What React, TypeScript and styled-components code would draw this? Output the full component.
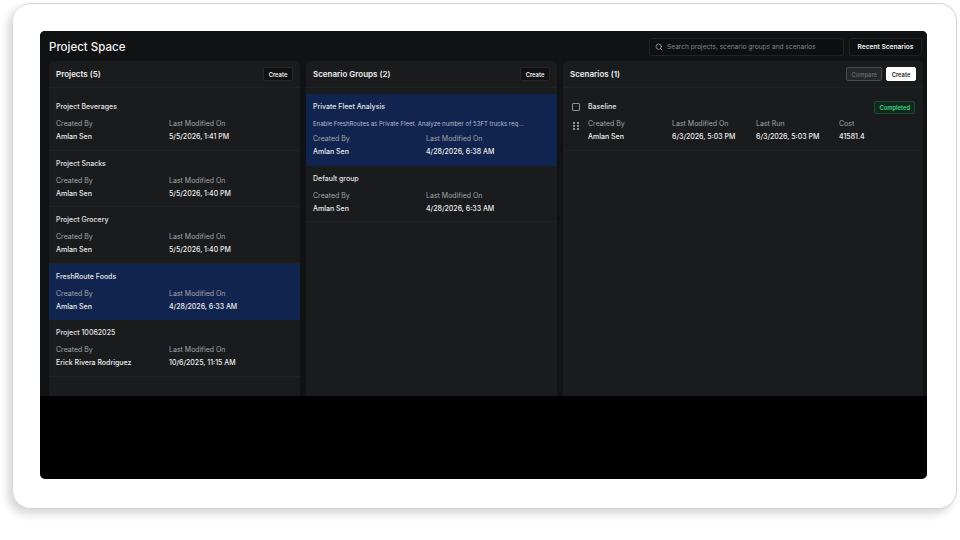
import React from 'react';
import styled, { createGlobalStyle } from 'styled-components';
import { Search } from 'lucide-react';

const GlobalStyle = createGlobalStyle`
  html, body {
    margin: 0;
    height: 100%;
    background: #ffffff;
    font-family: 'Inter', 'Liberation Sans', sans-serif;
  }
  * {
    box-sizing: border-box;
  }
`;

const Stage = styled.div`
  width: 960px;
  height: 540px;
  padding: 3px 3px 31px 13px;
  overflow: hidden;
`;

const Card = styled.div`
  height: 100%;
  padding: 27px 29px 29px 27px;
  background: #ffffff;
  border: 1px solid #d4d4d4;
  border-left: 0;
  border-radius: 18px;
  box-shadow: -5px 5px 9px rgba(0, 0, 0, 0.16);
`;

const AppWindow = styled.div`
  height: 100%;
  display: flex;
  flex-direction: column;
  background: #000000;
  border-radius: 5px;
  overflow: hidden;
`;

const Workspace = styled.div`
  height: 365px;
  flex-shrink: 0;
  display: flex;
  flex-direction: column;
  padding: 0 5px 0 9px;
  background: #111214;
`;

const TopBar = styled.header`
  height: 30px;
  flex-shrink: 0;
  display: flex;
  align-items: center;
  gap: 5px;
  padding-top: 1px;
`;

const Title = styled.h1`
  flex: 1;
  margin: 0;
  font-size: 11.5px;
  font-weight: 500;
  color: #f2f2f3;
`;

const SearchBox = styled.div`
  width: 195px;
  height: 18px;
  display: flex;
  align-items: center;
  gap: 4px;
  padding: 0 5px;
  font-size: 6.6px;
  color: #85878b;
  background: #0e0f11;
  border: 1px solid #212225;
  border-radius: 3px;

  svg {
    color: #b8babd;
  }
`;

const RecentButton = styled.button`
  width: 73px;
  height: 18px;
  padding: 0;
  font: 600 6.6px 'Inter', sans-serif;
  color: #f0f0f1;
  background: #0e0f11;
  border: 1px solid #212225;
  border-radius: 3px;
`;

const Columns = styled.div`
  flex: 1;
  min-height: 0;
  display: grid;
  grid-template-columns: 251px 251px 360px;
  gap: 6px;
`;

const Panel = styled.section`
  display: flex;
  flex-direction: column;
  background: #1a1b1d;
  border-radius: 5px 5px 0 0;
`;

const PanelHeader = styled.div`
  height: 27px;
  flex-shrink: 0;
  display: flex;
  align-items: center;
  justify-content: space-between;
  padding: 0 7px;
  border-bottom: 1px solid #202123;
`;

const PanelTitle = styled.h2`
  margin: 0;
  font-size: 8px;
  font-weight: 600;
  color: #eeeeef;
`;

const Actions = styled.div`
  display: flex;
  gap: 4px;
`;

const SmallButton = styled.button<{ $variant?: 'light' | 'disabled' }>`
  height: 14px;
  min-width: 30px;
  padding: 0 4px;
  font: 600 5.8px 'Inter', sans-serif;
  border-radius: 2px;
  color: ${(p) => (p.$variant === 'light' ? '#17181a' : p.$variant === 'disabled' ? '#64666a' : '#f0f0f1')};
  background: ${(p) => (p.$variant === 'light' ? '#ffffff' : p.$variant === 'disabled' ? '#26272a' : '#0f1012')};
  border: 1px solid ${(p) => (p.$variant === 'light' ? '#ffffff' : p.$variant === 'disabled' ? '#4a4b4f' : '#26272a')};
`;

const List = styled.div`
  padding-top: 6px;
`;

const Row = styled.article<{ $selected?: boolean }>`
  padding: 7px 7px 6.5px;
  background: ${(p) => (p.$selected ? '#11244f' : 'transparent')};
  border-bottom: 1px solid ${(p) => (p.$selected ? '#11244f' : '#202123')};
`;

const ScenarioRow = styled.article`
  display: flex;
  gap: 8px;
  padding: 7px 8px 6.5px 9px;
  border-bottom: 1px solid #202123;
`;

const RowTools = styled.div`
  width: 8px;
  flex-shrink: 0;
  display: flex;
  flex-direction: column;
  align-items: center;
  gap: 11px;
  padding-top: 2px;
`;

const Checkbox = styled.span`
  width: 8px;
  height: 8px;
  border: 1px solid #8b8d91;
  border-radius: 1px;
`;

const ScenarioBody = styled.div`
  flex: 1;
`;

const TitleLine = styled.div`
  height: 13px;
  display: flex;
  align-items: flex-start;
  justify-content: space-between;
`;

const RowTitle = styled.div`
  height: 12px;
  font-size: 7px;
  line-height: 12px;
  font-weight: 500;
  color: #e3e4e6;
`;

const Description = styled.div`
  height: 12px;
  margin-top: 5px;
  font-size: 6px;
  line-height: 12px;
  color: #b4bccb;
  white-space: nowrap;
`;

const Badge = styled.span`
  height: 13px;
  padding: 0 4px;
  font-size: 5.8px;
  line-height: 11px;
  font-weight: 600;
  color: #45d483;
  background: #10291d;
  border: 1px solid #1d4a32;
  border-radius: 2px;
`;

const MetaGrid = styled.div<{ $columns: string; $tight?: boolean }>`
  display: grid;
  grid-template-columns: ${(p) => p.$columns};
  grid-auto-rows: 12px;
  row-gap: 1px;
  margin-top: ${(p) => (p.$tight ? '3px' : '5px')};
`;

const ScenarioMeta = styled(MetaGrid)`
  margin-top: 4px;
`;

const Label = styled.div`
  font-size: 7px;
  line-height: 12px;
  color: #a3a5a9;
`;

const Value = styled.div`
  font-size: 7px;
  line-height: 12px;
  font-weight: 500;
  color: #eeeeef;
  white-space: nowrap;
`;

const Blank = styled.div`
  flex: 1;
`;

const projects = [
  { name: 'Project Beverages', by: 'Amlan Sen', on: '5/5/2026, 1:41 PM' },
  { name: 'Project Snacks', by: 'Amlan Sen', on: '5/5/2026, 1:40 PM' },
  { name: 'Project Grocery', by: 'Amlan Sen', on: '5/5/2026, 1:40 PM' },
  { name: 'FreshRoute Foods', by: 'Amlan Sen', on: '4/28/2026, 6:33 AM', selected: true },
  { name: 'Project 10062025', by: 'Erick Rivera Rodriguez', on: '10/6/2025, 11:15 AM' },
];

const groups = [
  {
    name: 'Private Fleet Analysis',
    text: 'Enable FreshRoutes as Private Fleet. Analyze number of 53FT trucks req...',
    by: 'Amlan Sen',
    on: '4/28/2026, 6:38 AM',
    selected: true,
  },
  { name: 'Default group', by: 'Amlan Sen', on: '4/28/2026, 6:33 AM' },
];

const DragDots = () => (
  <svg width="6" height="8" viewBox="0 0 6 8" fill="#d6d7d9">
    {[1, 4, 7].map((y) =>
      [1, 5].map((x) => <rect key={`${x}-${y}`} x={x - 0.8} y={y - 0.8} width="1.6" height="1.6" />)
    )}
  </svg>
);

function App() {
  return (
    <>
      <GlobalStyle />
      <Stage>
        <Card>
          <AppWindow>
            <Workspace>
              <TopBar>
                <Title>Project Space</Title>
                <SearchBox>
                  <Search size={8} strokeWidth={2} />
                  Search projects, scenario groups and scenarios
                </SearchBox>
                <RecentButton>Recent Scenarios</RecentButton>
              </TopBar>
              <Columns>
                <Panel>
                  <PanelHeader>
                    <PanelTitle>Projects (5)</PanelTitle>
                    <SmallButton>Create</SmallButton>
                  </PanelHeader>
                  <List>
                    {projects.map((p) => (
                      <Row key={p.name} $selected={p.selected}>
                        <RowTitle>{p.name}</RowTitle>
                        <MetaGrid $columns="113px 1fr">
                          <Label>Created By</Label>
                          <Label>Last Modified On</Label>
                          <Value>{p.by}</Value>
                          <Value>{p.on}</Value>
                        </MetaGrid>
                      </Row>
                    ))}
                  </List>
                </Panel>
                <Panel>
                  <PanelHeader>
                    <PanelTitle>Scenario Groups (2)</PanelTitle>
                    <SmallButton>Create</SmallButton>
                  </PanelHeader>
                  <List>
                    {groups.map((g) => (
                      <Row key={g.name} $selected={g.selected}>
                        <RowTitle>{g.name}</RowTitle>
                        {g.text && <Description>{g.text}</Description>}
                        <MetaGrid $columns="113px 1fr" $tight={!!g.text}>
                          <Label>Created By</Label>
                          <Label>Last Modified On</Label>
                          <Value>{g.by}</Value>
                          <Value>{g.on}</Value>
                        </MetaGrid>
                      </Row>
                    ))}
                  </List>
                </Panel>
                <Panel>
                  <PanelHeader>
                    <PanelTitle>Scenarios (1)</PanelTitle>
                    <Actions>
                      <SmallButton $variant="disabled">Compare</SmallButton>
                      <SmallButton $variant="light">Create</SmallButton>
                    </Actions>
                  </PanelHeader>
                  <List>
                    <ScenarioRow>
                      <RowTools>
                        <Checkbox />
                        <DragDots />
                      </RowTools>
                      <ScenarioBody>
                        <TitleLine>
                          <RowTitle>Baseline</RowTitle>
                          <Badge>Completed</Badge>
                        </TitleLine>
                        <ScenarioMeta $columns="84px 84px 83px 1fr">
                          <Label>Created By</Label>
                          <Label>Last Modified On</Label>
                          <Label>Last Run</Label>
                          <Label>Cost</Label>
                          <Value>Amlan Sen</Value>
                          <Value>6/3/2026, 5:03 PM</Value>
                          <Value>6/3/2026, 5:03 PM</Value>
                          <Value>41581.4</Value>
                        </ScenarioMeta>
                      </ScenarioBody>
                    </ScenarioRow>
                  </List>
                </Panel>
              </Columns>
            </Workspace>
            <Blank />
          </AppWindow>
        </Card>
      </Stage>
    </>
  );
}

export default App;
